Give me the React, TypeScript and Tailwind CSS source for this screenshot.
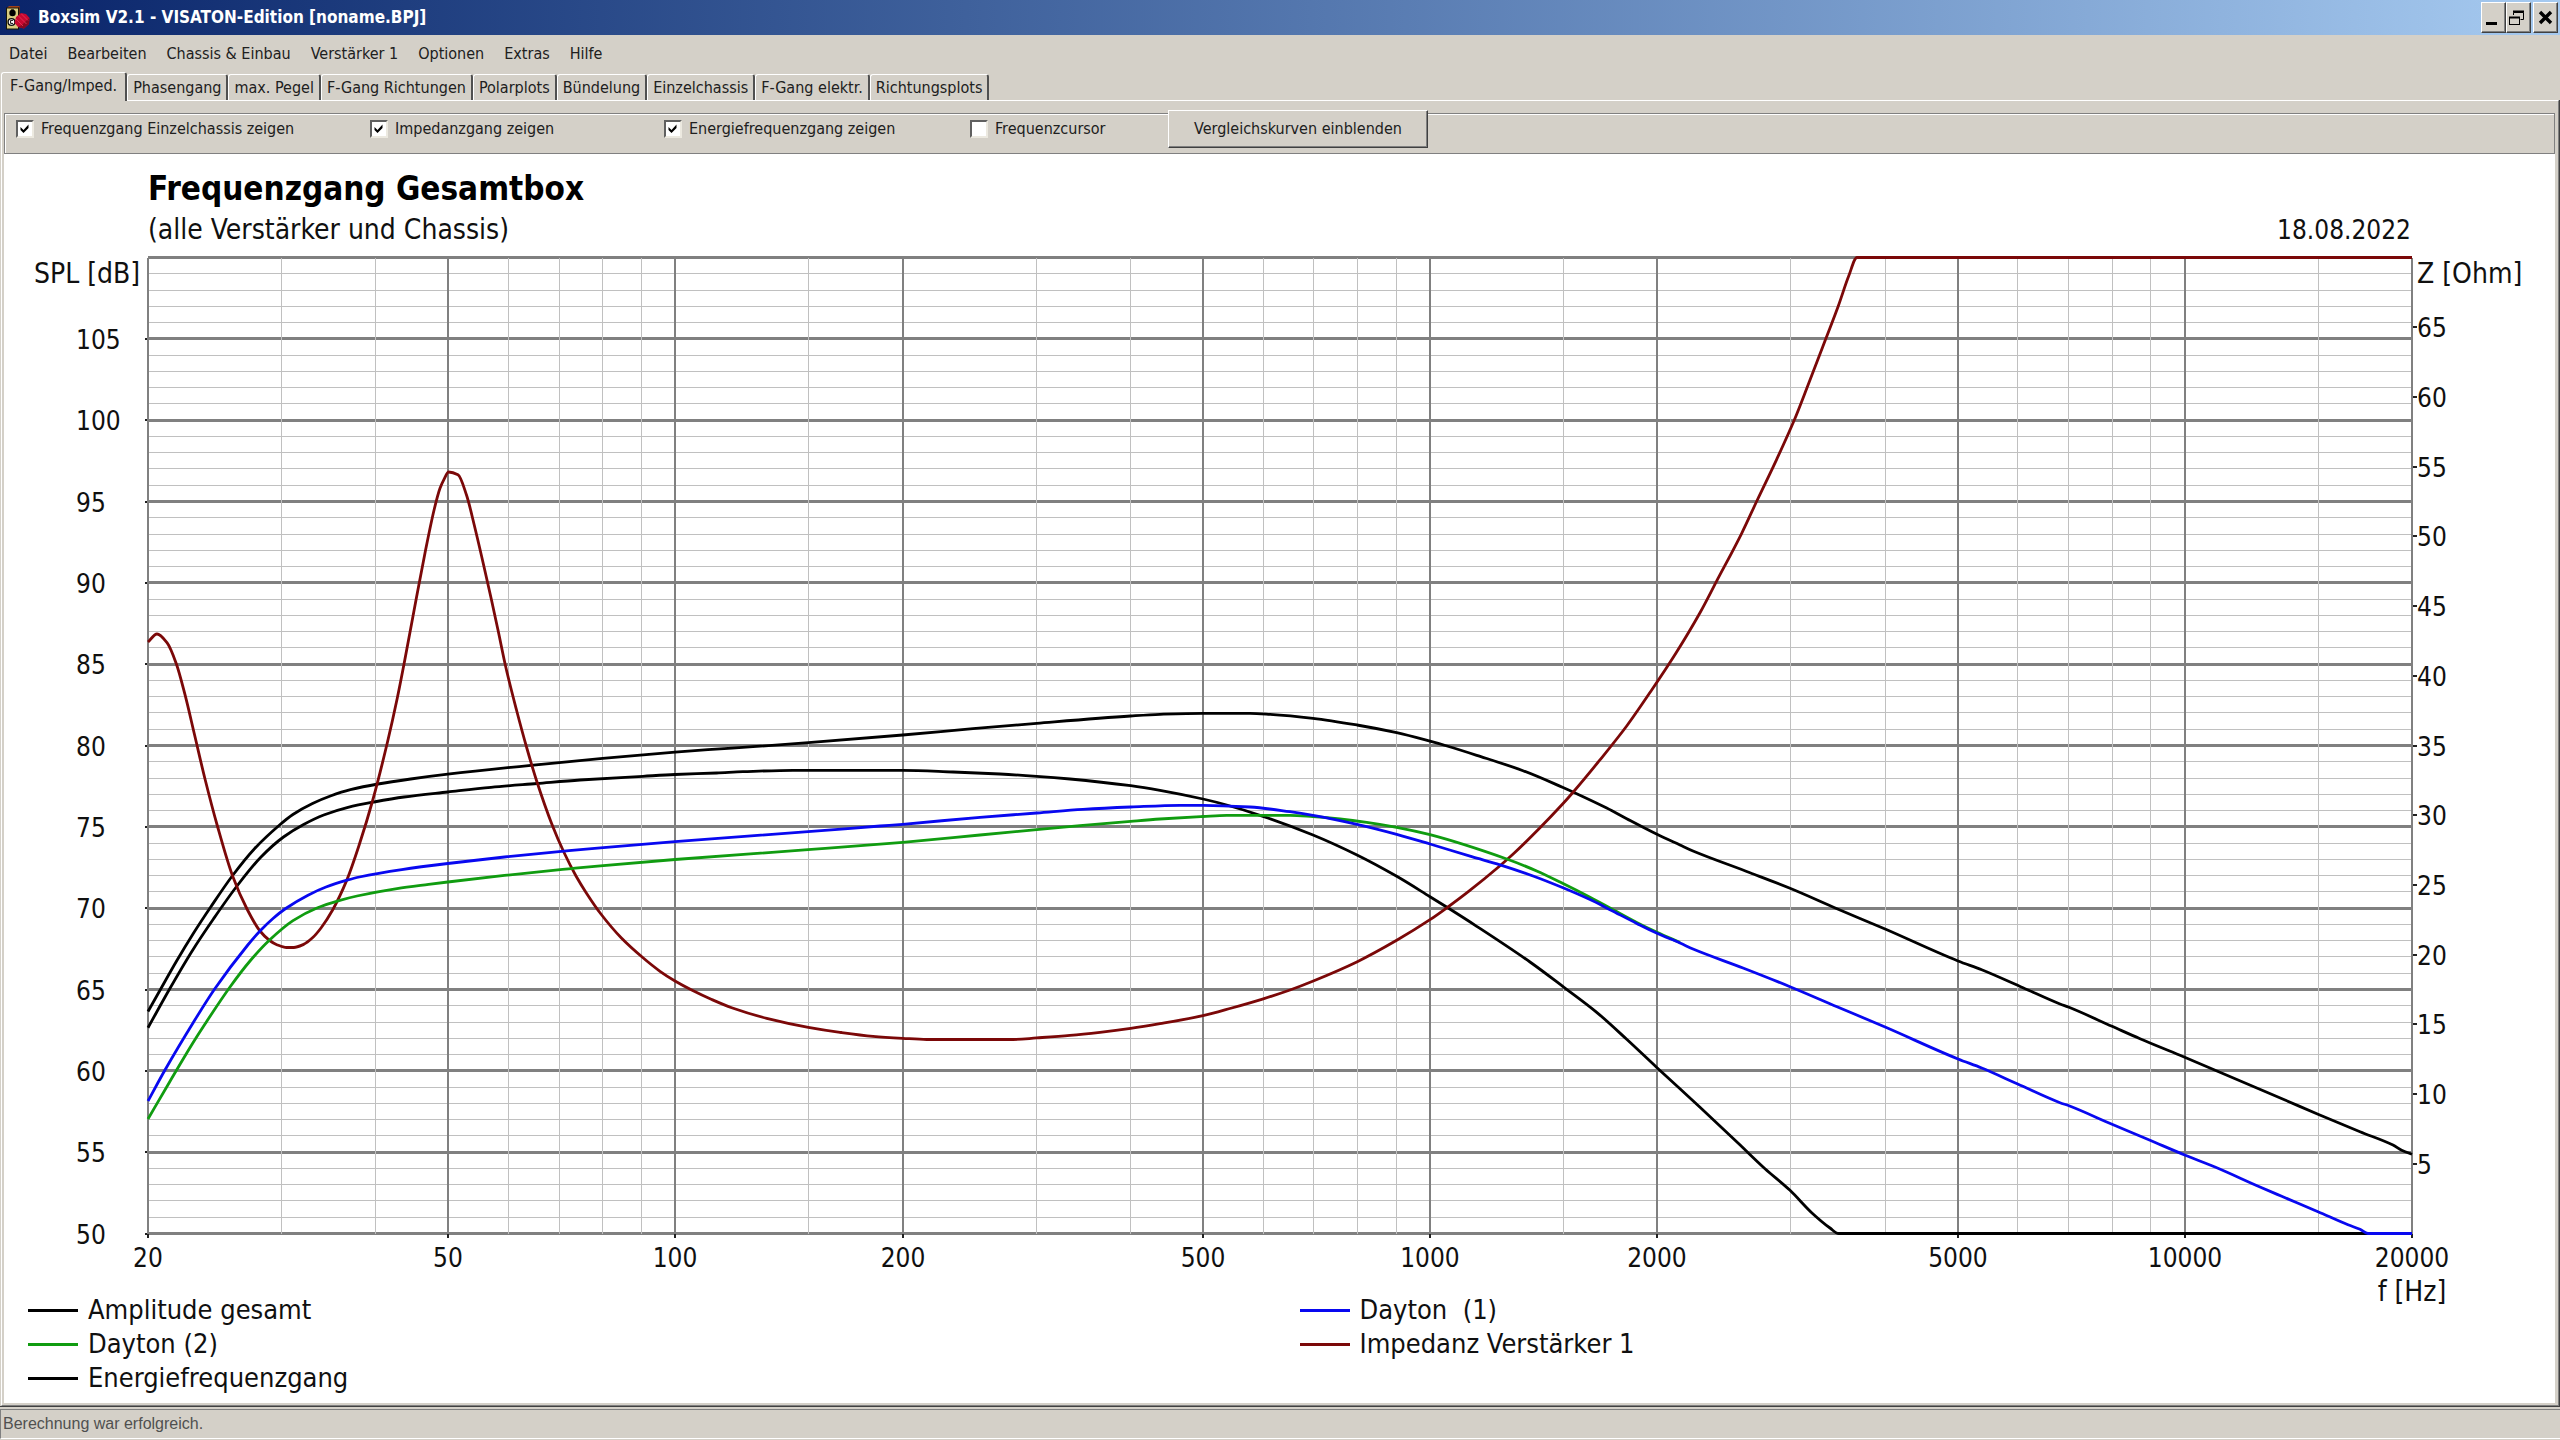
import React from "react";

const MENU = ["Datei", "Bearbeiten", "Chassis & Einbau", "Verstärker 1", "Optionen", "Extras", "Hilfe"];

const TABS = [
  "F-Gang/Imped.",
  "Phasengang",
  "max. Pegel",
  "F-Gang Richtungen",
  "Polarplots",
  "Bündelung",
  "Einzelchassis",
  "F-Gang elektr.",
  "Richtungsplots",
];

const UI_FONT = "font-['DejaVu_Sans_Condensed','DejaVu_Sans',sans-serif]";

/* Plot area in chart units */
const LEFT = 148;
const RIGHT = 2412;
const TOP = 257.5;
const BOTTOM = 1233.5;

const xOf = (hz: number) => Math.round(LEFT + (Math.log10(hz / 20) * (RIGHT - LEFT)) / 3);
const yOfDb = (db: number) => BOTTOM - ((db - 50) * (BOTTOM - TOP)) / 60;
const yOfOhm = (ohm: number) => BOTTOM - (ohm * (BOTTOM - TOP)) / 70;

const MAJOR_HZ = [20, 50, 100, 200, 500, 1000, 2000, 5000, 10000, 20000];
const MINOR_HZ = [
  30, 40, 60, 70, 80, 90, 150, 300, 400, 600, 700, 800, 900, 1500, 3000, 4000, 6000, 7000, 8000, 9000, 15000,
];
const DB_LINES = Array.from({ length: 61 }, (_, i) => 50 + i);
const DB_LABELS = [50, 55, 60, 65, 70, 75, 80, 85, 90, 95, 100, 105];
const OHM_LABELS = [5, 10, 15, 20, 25, 30, 35, 40, 45, 50, 55, 60, 65];

type Point = [number, number];

const TOTAL: Point[] = [
  [148, 1011.5], [160.7, 989], [176.3, 961.5], [193.3, 933.5], [210.7, 907], [232.6, 875.5], [254.5, 848.7],
  [279, 825.5], [292.9, 814.5], [312.5, 803.5], [330.4, 796], [350.4, 789.7], [378, 784], [410.7, 779],
  [447.8, 774.2], [531, 765.3], [602.7, 758.4], [675, 752.2], [708, 749.7], [753, 746.7], [808.3, 742.7],
  [902.7, 735], [973, 728.7], [1036.7, 723.3], [1130.7, 716], [1160, 714.3], [1203, 713.3], [1250, 713.3],
  [1270, 714.3], [1313, 718.3], [1357, 725], [1396.7, 732.7], [1430, 741.2], [1447, 746], [1476.7, 755.3],
  [1523, 770.7], [1563, 787.5], [1573, 792], [1606.7, 808], [1626.7, 818.7], [1657, 834.3], [1680, 845],
  [1693, 851], [1750, 872.7], [1790, 888.3], [1837, 908.7], [1885.7, 929.3], [1958, 961], [1981.7, 969.7],
  [2023, 987.7], [2060, 1004], [2069, 1007.3], [2112, 1026.3], [2140, 1038.7], [2180, 1055.3], [2285, 1100],
  [2318, 1114.3], [2360, 1131.7], [2393, 1145], [2401.7, 1150.3], [2412, 1154.3],
];

const ENERGY: Point[] = [
  [148, 1027.7], [169.6, 989], [192, 951.2], [213.4, 919], [236.6, 886.5], [261, 857], [283.5, 837],
  [303.6, 824.5], [323.7, 815], [348, 807.3], [374, 802], [404, 797], [447.8, 792], [491, 787.3],
  [537, 783.5], [580, 780], [643, 776.3], [675, 774.5], [716.7, 773], [743, 771.7], [793, 770.3],
  [902.7, 770.3], [953, 772], [1000, 774], [1036.7, 776.3], [1070, 779], [1130.7, 785.7], [1160, 790.3],
  [1203, 799], [1226.7, 805], [1263, 816.3], [1313, 835], [1357, 855], [1396.7, 876.3], [1430, 896.7],
  [1447, 907.3], [1476.7, 926.3], [1530, 962], [1564, 987.3], [1596.7, 1012.3], [1626.7, 1039.3],
  [1657, 1067.7], [1700, 1107.3], [1738, 1143], [1765, 1168.7], [1790, 1190.3], [1811.7, 1212.7],
  [1830, 1228], [1838.7, 1233.5], [2412, 1233.5],
];

const DAYTON_1: Point[] = [
  [148, 1101], [165, 1070], [193.3, 1022.5], [215, 988.5], [247.8, 945], [260, 931], [273, 918.5],
  [285.7, 908.5], [308, 895.2], [326, 887], [347, 880.2], [359.4, 877], [401.8, 869.6], [447.8, 863.5],
  [504.5, 857], [564, 851.2], [600.4, 847.8], [675, 841.6], [808, 831.7], [880, 826], [902.7, 824.3],
  [980, 817.3], [1036.7, 813], [1083, 809.3], [1130.7, 807], [1180, 805.3], [1203, 805.3], [1250, 807],
  [1290, 811.7], [1313, 815.3], [1357, 824.3], [1396.7, 834.3], [1430, 844], [1471.7, 856.7],
  [1500, 864.8], [1533, 876], [1563, 887.8], [1590, 899.6], [1610, 909.7], [1636.7, 923.4], [1657, 933.3],
  [1680, 943], [1693, 949], [1743, 968], [1790, 986.7], [1837, 1006.7], [1885.7, 1027.3], [1958, 1059],
  [1981.7, 1068], [2017.7, 1084], [2060, 1102.7], [2069, 1105.8], [2112, 1124.3], [2150, 1140.3],
  [2184.7, 1155], [2215, 1167], [2260, 1187], [2281.7, 1196.3], [2318, 1211.7], [2348, 1224.8],
  [2360, 1229.3], [2368, 1233.5], [2412, 1233.5],
];

const DAYTON_2: Point[] = [
  [148, 1119], [169.6, 1082], [193.3, 1042.3], [205, 1024], [230, 987], [250, 961], [269.6, 940],
  [293, 920.6], [317, 908], [339, 900.6], [357, 896], [397, 888.6], [428.6, 884.4], [447.8, 882],
  [504.5, 875.4], [571.4, 868.6], [600.4, 865.8], [675, 859.5], [808, 849.7], [902.7, 842.3], [980, 835],
  [1036.7, 829.7], [1080, 825.6], [1130.7, 821.3], [1160, 819], [1203, 816.5], [1226.7, 815.3],
  [1290, 815.3], [1313, 816.7], [1340, 819], [1366.7, 822.3], [1396.7, 827.3], [1430, 834.7],
  [1506.7, 859], [1536.7, 871], [1563, 883.6], [1590, 897.3], [1610, 908], [1636.7, 922.4],
  [1657, 932.3], [1680, 942.5],
];

const IMPEDANCE: Point[] = [
  [148, 642], [157, 634], [167, 642.7], [176.3, 663.7], [185, 694.7], [194.6, 735], [205, 779],
  [217.4, 826], [232.6, 876], [247, 909], [260, 931], [269.6, 940.5], [276.8, 944.7], [286.6, 947.5],
  [293.8, 947.5], [303.6, 944.4], [312.5, 937.8], [321, 928], [332.6, 910], [347, 879.6], [359, 845.5],
  [372.8, 800], [387.5, 742], [397.3, 698], [405.4, 656.8], [416, 600], [425, 553],
  [434.3, 509], [440, 488.3], [444, 479.3], [448.6, 472], [458, 474.7], [466.5, 495],
  [474, 524], [491.5, 600], [498, 630], [506, 668], [516.5, 710], [526.8, 748], [537, 782],
  [551.8, 824], [563.8, 852], [576, 876], [586, 892.4], [601.3, 914.5], [621.4, 938], [643, 957.8],
  [660, 971.3], [675, 981], [691.7, 990], [711.7, 999.5], [731.7, 1007.7], [766.7, 1018.3],
  [808.3, 1027.3], [840, 1032.3], [873, 1036.3], [902.7, 1038.3], [926.7, 1039.5], [1013, 1039.5],
  [1036.7, 1037.9], [1070, 1035.4], [1100, 1032.3], [1130.7, 1028.4], [1160, 1023.7], [1203, 1015.7],
  [1231.7, 1008], [1263.3, 998.8], [1290, 990], [1313.3, 981], [1357.3, 961.7], [1396.7, 940.3],
  [1430, 919.7], [1447.3, 907.5], [1468.3, 891.7], [1500, 865.7], [1514, 853.3], [1540, 827.8],
  [1563.3, 803.3], [1573.3, 792], [1599.3, 760.7], [1626.7, 726], [1651.7, 690], [1676, 653],
  [1700, 612.7], [1716, 582.3], [1741.7, 533.3], [1757.3, 500], [1776.7, 459.3], [1794.3, 420],
  [1807.3, 387], [1826, 338.3], [1838.3, 306], [1848.7, 276], [1857, 257.5], [2412, 257.5],
];

/* Monotone cubic path: smooth, and never overshoots a clipped stretch. */
function smoothPath(pts: Point[]): string {
  const n = pts.length;
  const slope = pts.slice(0, -1).map((p, i) => (pts[i + 1][1] - p[1]) / (pts[i + 1][0] - p[0]));
  const tangent = pts.map((_, i) => {
    if (i === 0) return slope[0];
    if (i === n - 1) return slope[n - 2];
    const a = slope[i - 1];
    const b = slope[i];
    return a * b <= 0 ? 0 : (2 * a * b) / (a + b);
  });
  let d = `M${pts[0][0]} ${pts[0][1]}`;
  for (let i = 0; i < n - 1; i++) {
    const [x0, y0] = pts[i];
    const [x1, y1] = pts[i + 1];
    const h = (x1 - x0) / 3;
    d += `C${x0 + h} ${y0 + tangent[i] * h} ${x1 - h} ${y1 - tangent[i + 1] * h} ${x1} ${y1}`;
  }
  return d;
}

const CURVES = [
  { id: "total", points: TOTAL, color: "#000000" },
  { id: "energy", points: ENERGY, color: "#000000" },
  { id: "impedance", points: IMPEDANCE, color: "#7b0808" },
  { id: "dayton2", points: DAYTON_2, color: "#109c10" },
  { id: "dayton1", points: DAYTON_1, color: "#0808f0" },
];

const LEGEND = [
  { name: "Amplitude gesamt", line: "bg-black" },
  { name: "Dayton  (1)", line: "bg-[#0808f0]" },
  { name: "Dayton (2)", line: "bg-[#109c10]" },
  { name: "Impedanz Verstärker 1", line: "bg-[#7b0808]" },
  { name: "Energiefrequenzgang", line: "bg-black" },
];

const OPTIONS = [
  { id: "einzel", label: "Frequenzgang Einzelchassis zeigen", checked: true, width: "w-[354px]" },
  { id: "impedanz", label: "Impedanzgang zeigen", checked: true, width: "w-[294px]" },
  { id: "energie", label: "Energiefrequenzgang zeigen", checked: true, width: "w-[306px]" },
  { id: "cursor", label: "Frequenzcursor", checked: false, width: "w-[198px]" },
];

function AppIcon() {
  return (
    <svg viewBox="0 0 24 24" className="size-6" aria-hidden="true">
      <path d="M1 2L3 0H14L12 2Z" fill="#a04018" />
      <path d="M12 2L14 0V20L12 23Z" fill="#6a2810" />
      <rect x="0.5" y="2" width="12" height="21" fill="#d8cc80" stroke="#181808" />
      <circle cx="6.5" cy="7" r="3.2" fill="#000" />
      <rect x="5" y="3.4" width="3" height="3" fill="#000" />
      <circle cx="5.5" cy="16" r="3.4" fill="#fff" stroke="#101010" strokeWidth="1.4" />
      <path d="M4.6 14.4H7M4.6 14.4V17.4H7" stroke="#101010" fill="none" />
      <path d="M10 11L15 7L20 8L23.500 12L23 18L18 22.500L12 21L8.500 17Z" fill="#c80830" />
      <path d="M23.500 12L23 18L18 22.500L12 21L16 19L20 15Z" fill="#880820" />
      <path d="M10 13L17 20M12.500 10L20.500 18M15.500 8L22 14.500" stroke="#e83858" strokeWidth="0.8" />
    </svg>
  );
}

function WindowButton({ label, children }: { label: string; children: React.ReactNode }) {
  return (
    <button
      type="button"
      aria-label={label}
      className="flex h-[31px] w-[25px] items-center justify-center border border-t-white border-l-white border-r-[#404040] border-b-[#404040] bg-[#d4d0c8] shadow-[inset_-1px_-1px_0_#808080]"
    >
      {children}
    </button>
  );
}

function TitleBar() {
  return (
    <header className="flex h-[35px] items-center justify-between bg-linear-to-r from-[#0a246a] to-[#a6caf0] pr-0.5 pl-1.5">
      <div className="flex items-center gap-2">
        <AppIcon />
        <h1 className="text-[17px] font-bold text-white">Boxsim V2.1 - VISATON-Edition [noname.BPJ]</h1>
      </div>
      <div className="flex">
        <WindowButton label="Minimieren">
          <svg viewBox="0 0 23 29" className="h-[29px] w-[23px]" aria-hidden="true">
            <rect x="4" y="19" width="11" height="3" fill="#000" />
          </svg>
        </WindowButton>
        <WindowButton label="Wiederherstellen">
          <svg viewBox="0 0 23 29" className="h-[29px] w-[23px]" aria-hidden="true" fill="none" stroke="#000">
            <path d="M6.500 12V9.500H16.500V16.500H13.500" />
            <path d="M6 8.500H17" strokeWidth="2" />
            <rect x="2.500" y="14.500" width="10" height="7" />
            <path d="M2 14.500H13" strokeWidth="2" />
          </svg>
        </WindowButton>
        <div className="ml-0.5">
          <WindowButton label="Schließen">
            <svg viewBox="0 0 23 29" className="h-[29px] w-[23px]" aria-hidden="true">
              <path d="M6 9L17 20M17 9L6 20" stroke="#000" strokeWidth="3.4" />
            </svg>
          </WindowButton>
        </div>
      </div>
    </header>
  );
}

function Tab({ label, active }: { label: string; active: boolean }) {
  return (
    <button
      type="button"
      role="tab"
      aria-selected={active}
      className={
        "rounded-t-[3px] border-t border-l border-r-2 border-t-white border-l-white border-r-[#505050] bg-[#d4d0c8] " +
        (active ? "z-10 -mb-px h-[29px] px-2 pb-0.5" : "h-[26px] px-[5px]")
      }
    >
      {label}
    </button>
  );
}

function OptionBox({ id, label, checked, width }: { id: string; label: string; checked: boolean; width: string }) {
  return (
    <div className={"mt-[5px] flex h-[19px] items-center gap-[7px] " + width}>
      <span className="grid size-[18px] place-items-center">
        <input
          id={id}
          type="checkbox"
          defaultChecked={checked}
          className="peer col-start-1 row-start-1 size-[18px] appearance-none border-2 border-t-[#606060] border-l-[#606060] border-r-[#ece9e0] border-b-[#ece9e0] bg-white"
        />
        <svg
          viewBox="0 0 18 18"
          className="pointer-events-none invisible col-start-1 row-start-1 size-[18px] peer-checked:visible"
          aria-hidden="true"
        >
          <path d="M4.500 7L7.500 10L12.500 4.500V8L7.500 13L4.500 10Z" fill="#000" />
        </svg>
      </span>
      <label htmlFor={id} className="whitespace-nowrap">
        {label}
      </label>
    </div>
  );
}

function Plot() {
  return (
    <svg
      viewBox="4 247 2551 1065"
      className="-mt-0.5 block h-auto w-full text-[26px]"
      role="img"
      aria-label="Frequenzgang Gesamtbox"
      fill="#101010"
    >
      <g stroke="#c0c0c0" shapeRendering="crispEdges">
        {DB_LINES.filter((db) => db % 5 !== 0).map((db) => (
          <line key={db} x1={LEFT} x2={RIGHT} y1={yOfDb(db)} y2={yOfDb(db)} />
        ))}
      </g>
      <g stroke="#808080" shapeRendering="crispEdges">
        {DB_LINES.filter((db) => db % 5 === 0).map((db) => (
          <line key={db} x1={LEFT} x2={RIGHT} y1={yOfDb(db)} y2={yOfDb(db)} strokeWidth="3" />
        ))}
        {MAJOR_HZ.map((hz) => (
          <line key={hz} x1={xOf(hz)} x2={xOf(hz)} y1={TOP} y2={BOTTOM} strokeWidth="2" />
        ))}
      </g>
      <g stroke="#c0c0c0" shapeRendering="crispEdges">
        {MINOR_HZ.map((hz) => (
          <line key={hz} x1={xOf(hz) + 0.5} x2={xOf(hz) + 0.5} y1={TOP} y2={BOTTOM} />
        ))}
      </g>
      <g stroke="#202020" shapeRendering="crispEdges">
        {DB_LABELS.map((db) => (
          <line key={db} x1={LEFT - 3} x2={LEFT - 1} y1={yOfDb(db)} y2={yOfDb(db)} strokeWidth="2" />
        ))}
        {OHM_LABELS.map((ohm) => (
          <line key={ohm} x1={RIGHT + 1} x2={RIGHT + 5} y1={yOfOhm(ohm)} y2={yOfOhm(ohm)} strokeWidth="2" />
        ))}
        {MAJOR_HZ.map((hz) => (
          <line key={hz} x1={xOf(hz)} x2={xOf(hz)} y1={BOTTOM} y2={BOTTOM + 4} strokeWidth="2" />
        ))}
      </g>
      <g fill="none" strokeWidth="2.8" strokeLinejoin="round">
        {CURVES.map((c) => (
          <path key={c.id} d={smoothPath(c.points)} stroke={c.color} />
        ))}
      </g>
      <g className="text-[28px]">
        <text x="34" y="283">
          SPL [dB]
        </text>
        <text x="2417" y="283">
          Z [Ohm]
        </text>
        <text x={RIGHT} y="1301" textAnchor="middle">
          f [Hz]
        </text>
      </g>
      {DB_LABELS.map((db) => (
        <text key={db} x="76" y={Math.round(yOfDb(db) + 10)}>
          {db}
        </text>
      ))}
      {OHM_LABELS.map((ohm) => (
        <text key={ohm} x="2417" y={Math.round(yOfOhm(ohm) + 10)}>
          {ohm}
        </text>
      ))}
      {MAJOR_HZ.map((hz) => (
        <text key={hz} x={xOf(hz)} y="1267" textAnchor="middle">
          {hz}
        </text>
      ))}
    </svg>
  );
}

export default function App() {
  return (
    <div className={"flex min-h-screen flex-col bg-[#d4d0c8] text-[16px] text-[#202020] " + UI_FONT}>
      <TitleBar />

      <nav className="flex h-[37px] items-center">
        {MENU.map((item) => (
          <button key={item} type="button" className="pr-[11px] pl-[9px]">
            {item}
          </button>
        ))}
      </nav>

      <div role="tablist" className="flex items-end pl-px leading-5">
        {TABS.map((label, i) => (
          <Tab key={label} label={label} active={i === 0} />
        ))}
      </div>

      <main className="flex grow flex-col border-r border-b border-[#404040] pl-px">
        <div className="flex grow flex-col border border-t-white border-r-[#808080] border-b-[#808080] border-l-white pt-3 pr-[3px] pb-0.5 pl-0.5">
          <div className="flex h-[41px] items-start border border-[#808080] pl-[11px] shadow-[inset_1px_1px_0_#fff]">
            {OPTIONS.map((o) => (
              <OptionBox key={o.id} {...o} />
            ))}
            <button
              type="button"
              className="-mt-1 h-[38px] w-[260px] border border-t-white border-l-white border-r-[#404040] border-b-[#404040] bg-[#d4d0c8] shadow-[inset_-1px_-1px_0_#808080]"
            >
              Vergleichskurven einblenden
            </button>
          </div>

          <section className="grow bg-white pb-1.5 text-[27px] text-[#101010]">
            <div className="flex items-end justify-between pt-3.5 pr-36 pl-36">
              <div>
                <h2 className="text-[33px] leading-[42px] font-bold text-black">Frequenzgang Gesamtbox</h2>
                <p className="mt-px text-[28px] leading-[38px]">(alle Verstärker und Chassis)</p>
              </div>
              <time dateTime="2022-08-18" className="text-[26px] leading-[38px]">
                18.08.2022
              </time>
            </div>
            <Plot />
            <ul className="relative -mt-[19px] grid grid-cols-2 gap-x-4 pl-6 leading-[34px]">
              {LEGEND.map((item) => (
                <li key={item.name} className="flex items-center gap-2.5">
                  <span className={"h-[3px] w-[50px] " + item.line} />
                  <span className="whitespace-pre">{item.name}</span>
                </li>
              ))}
            </ul>
          </section>
        </div>
      </main>

      <footer className="mt-0.5 mb-px border-t border-b border-l border-t-[#808080] border-b-white border-l-[#808080] pl-0.5 font-['Liberation_Sans',Arial,sans-serif] leading-7 text-[#505050]">
        Berechnung war erfolgreich.
      </footer>
    </div>
  );
}
